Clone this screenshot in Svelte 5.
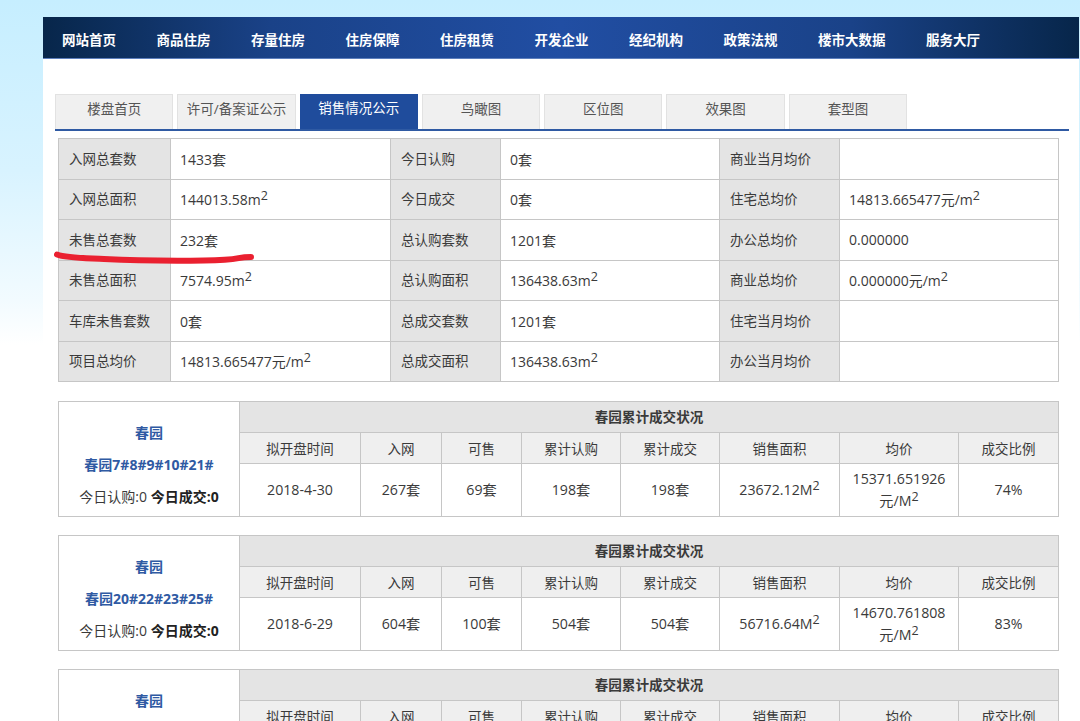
<script>
  const nav = ['网站首页', '商品住房', '存量住房', '住房保障', '住房租赁', '开发企业', '经纪机构', '政策法规', '楼市大数据', '服务大厅'];
  const tabs = ['楼盘首页', '许可/备案证公示', '销售情况公示', '鸟瞰图', '区位图', '效果图', '套型图'];
  const infoCols = [112, 220, 110, 219, 120, 219];
  const info = [
    [['入网总套数', '1433套'], ['今日认购', '0套'], ['商业当月均价', '']],
    [['入网总面积', '144013.58m', true], ['今日成交', '0套'], ['住宅总均价', '14813.665477元/m', true]],
    [['未售总套数', '232套'], ['总认购套数', '1201套'], ['办公总均价', '0.000000']],
    [['未售总面积', '7574.95m', true], ['总认购面积', '136438.63m', true], ['商业总均价', '0.000000元/m', true]],
    [['车库未售套数', '0套'], ['总成交套数', '1201套'], ['住宅当月均价', '']],
    [['项目总均价', '14813.665477元/m', true], ['总成交面积', '136438.63m', true], ['办公当月均价', '']]
  ];
  const saleCols = [181, 121, 81, 80, 99, 99, 120, 119, 100];
  const heads = ['拟开盘时间', '入网', '可售', '累计认购', '累计成交', '销售面积', '均价', '成交比例'];
  const sales = [
    { name: '春园7#8#9#10#21#', date: '2018-4-30', net: '267套', sale: '69套', buy: '198套', deal: '198套', area: '23672.12M', price: '15371.651926', ratio: '74%' },
    { name: '春园20#22#23#25#', date: '2018-6-29', net: '604套', sale: '100套', buy: '504套', deal: '504套', area: '56716.64M', price: '14670.761808', ratio: '83%' },
    { name: '' }
  ];
</script>

<div class="screen">
  <div class="page">
    <nav class="nav">
      {#each nav as item}<span class="nav-item">{item}</span>{/each}
    </nav>

    <div class="tabs">
      {#each tabs as tab, i}<span class="tab" class:active={i === 2}>{tab}</span>{/each}
    </div>

    <table class="info">
      <colgroup>{#each infoCols as w}<col style="width:{w}px" />{/each}</colgroup>
      <tbody>
        {#each info as row}
          <tr>
            {#each row as cell}
              <th>{cell[0]}</th>
              <td>{cell[1]}{#if cell[2]}<sup>2</sup>{/if}</td>
            {/each}
          </tr>
        {/each}
      </tbody>
    </table>

    {#each sales as s}
      <table class="sale">
        <colgroup>{#each saleCols as w}<col style="width:{w}px" />{/each}</colgroup>
        <tbody>
          <tr class="title">
            <td class="summary" rowspan={s.name ? 3 : 2}>
              <p class="link">春园</p>
              {#if s.name}
                <p class="link">{s.name}</p>
                <p class="today">今日认购:0 <b>今日成交:0</b></p>
              {/if}
            </td>
            <th colspan="8">春园累计成交状况</th>
          </tr>
          <tr class="heads">
            {#each heads as h}<th>{h}</th>{/each}
          </tr>
          {#if s.name}
            <tr class="values">
              <td>{s.date}</td>
              <td>{s.net}</td>
              <td>{s.sale}</td>
              <td>{s.buy}</td>
              <td>{s.deal}</td>
              <td>{s.area}<sup>2</sup></td>
              <td>{s.price}<br />元/M<sup>2</sup></td>
              <td>{s.ratio}</td>
            </tr>
          {/if}
        </tbody>
      </table>
    {/each}
  </div>

  <svg class="mark" width="210" height="20" viewBox="0 0 210 20" aria-hidden="true">
    <path d="M3 4.5 C 12 8, 30 8, 50 9 S 110 11, 150 10.5 S 180 7, 197 7" />
  </svg>
</div>

<style>
  :global(body) {
    margin: 0;
    overflow: hidden;
    background: #fff;
  }
  .screen {
    position: relative;
    height: 721px;
    overflow: hidden;
    padding-top: 17px;
    box-sizing: border-box;
    background: linear-gradient(180deg, #c6eeff 0, #d8f3ff 170px, #f2fbff 300px, #fff 345px);
    font-family: "Open Sans", "Noto Sans CJK SC", sans-serif;
    font-size: 13.5px;
    color: #3a3a3a;
  }
  .page {
    margin-left: 43px;
    width: 1036px;
    height: 704px;
    background: #fff;
    overflow: hidden;
  }
  .nav {
    display: flex;
    height: 42px;
    align-items: center;
    box-sizing: border-box;
    padding: 3px 0 0 19px;
    gap: 40.5px;
    background: linear-gradient(90deg, #07264a 0, #1a4288 22%, #214ea3 50%, #1a4288 78%, #07264a 100%);
    border-bottom: 1px solid #5d7fbd;
    color: #fff;
    font-weight: 700;
    font-size: 13.5px;
  }
  .tabs {
    display: flex;
    gap: 4px;
    margin: 35px 0 7px 12px;
    width: 1014px;
    height: 37px;
    box-sizing: border-box;
    border-bottom: 2px solid #2f5aa3;
  }
  .tab {
    box-sizing: border-box;
    width: 118.3px;
    height: 35px;
    border: 1px solid #e2e2e2;
    border-bottom: 0;
    background: #f0f0f0;
    color: #555;
    text-align: center;
    line-height: 29px;
    white-space: nowrap;
  }
  .tab.active {
    background: #1f4c9c;
    border-color: #1f4c9c;
    color: #fff;
    line-height: 27px;
  }
  table {
    border-collapse: collapse;
    table-layout: fixed;
    width: 1000px;
    margin-left: 15px;
  }
  th, td {
    border: 1px solid #c6c6c6;
    font-weight: 400;
    padding: 0;
  }
  .info {
    margin-bottom: 19px;
  }
  .info tr {
    height: 40.5px;
  }
  .info th {
    background: #e4e4e4;
    text-align: left;
    padding: 0 0 2px 10px;
    white-space: nowrap;
  }
  .info td {
    padding-left: 9px;
    white-space: nowrap;
    font-size: 14px;
  }
  sup {
    font-size: 12.5px;
    line-height: 0;
    vertical-align: 5px;
  }
  .sale {
    margin-bottom: 18px;
    text-align: center;
  }
  .title th {
    height: 28px;
    padding-bottom: 2px;
    background: #e4e4e4;
    font-weight: 700;
    font-size: 13.6px;
  }
  .heads th {
    height: 30px;
    background: #efefef;
  }
  .values td {
    height: 52px;
    line-height: 22px;
    font-size: 14.2px;
  }
  .summary {
    vertical-align: top;
    padding-top: 21px;
    background: #fff;
    font-size: 14px;
  }
  .summary p {
    margin: 0 0 12px;
    line-height: 20px;
  }
  .summary p:last-child {
    margin-bottom: 0;
  }
  .link {
    color: #2f5aa3;
    font-weight: 700;
  }
  .today b {
    color: #222;
  }
  .mark {
    position: absolute;
    left: 54px;
    top: 250px;
    pointer-events: none;
  }
  .mark path {
    fill: none;
    stroke: #ea2030;
    stroke-width: 6;
    stroke-linecap: round;
  }
</style>
